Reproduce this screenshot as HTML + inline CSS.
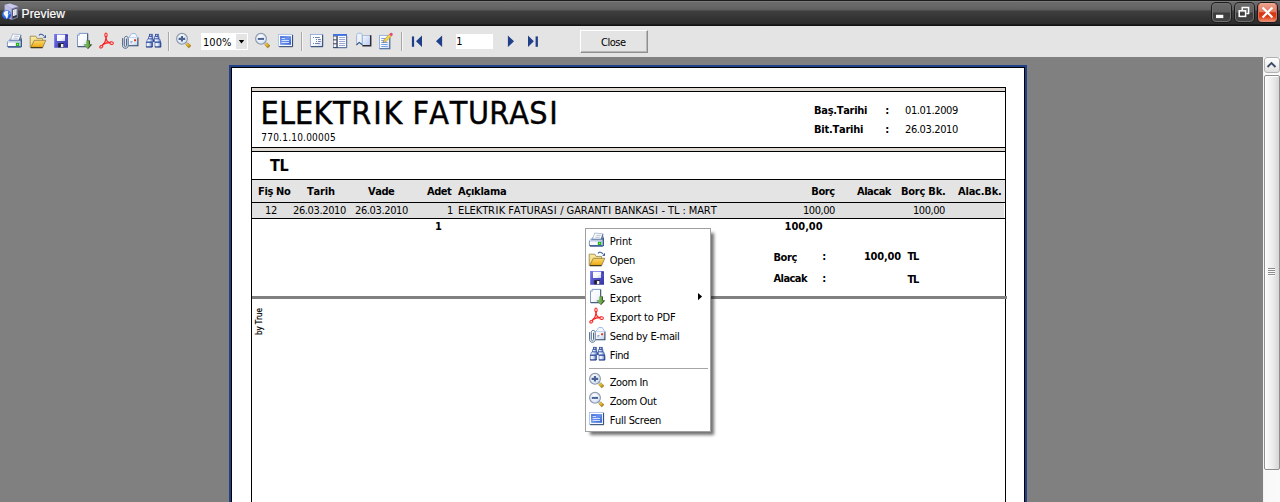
<!DOCTYPE html><html><head><meta charset="utf-8"><title>Preview</title><style>

html,body{margin:0;padding:0}
body{width:1280px;height:502px;overflow:hidden;position:relative;background:#808080;font-family:"DejaVu Sans Condensed","DejaVu Sans","Liberation Sans",sans-serif;font-size:11px;font-stretch:condensed;color:#000}
div,span{box-sizing:border-box}
.a{position:absolute}
.t{position:absolute;white-space:pre;display:block;font-kerning:none}
.big{-webkit-text-stroke:0.4px #000}
.ttl{-webkit-text-stroke:0.2px #fff}
.ic{position:absolute;width:18px;height:18px;line-height:0}
.ic svg{overflow:visible;display:block}
#tb{left:0;top:0;width:1280px;height:26px;background:linear-gradient(to bottom,#1c1c1c 0,#1c1c1c 1px,#808080 1px,#767676 2px,#6c6c6c 2px,#676767 6px,#5e5e5e 10px,#4c4c4c 10.5px,#3e3e3e 11.5px,#373737 16px,#2c2c2c 24px,#222 24.3px,#141414 24.8px,#101010 26px)}
.wb{position:absolute;top:3px;width:19px;height:19px;border-radius:4px;border:1px solid #6f6f6f;box-shadow:0 0 0 1px #1c1c1c;background:linear-gradient(to bottom,#6a6a6a 0,#606060 47%,#3c3c3c 53%,#444 100%)}
.wb.cl{border-color:#f0a694 #d8705c #e08c78 #d8705c;background:linear-gradient(to bottom,#ec9f8a 0,#e07a62 45%,#d8340f 52%,#dc3d16 75%,#f08a68 100%)}
#bar{left:0;top:26px;width:1280px;height:31px;background:#e4e4e4}
.sep{position:absolute;top:32px;width:2px;height:19px;border-left:1px solid #a9a9a9;border-right:1px solid #f4f4f4}
#close{left:580px;top:30px;width:68px;height:23px;background:#e4e4e4;border-top:1px solid #fff;border-left:1px solid #fff;border-right:1px solid #8e8e8e;border-bottom:1px solid #8e8e8e;box-shadow:inset -1px -1px 0 #b8b8b8}
#pg{left:229px;top:65px;width:798px;height:460px;background:#1f3f88}
#pgi{left:231px;top:67px;width:794px;height:460px;background:#fff;border:1px solid #000}
.bl{position:absolute;background:#000}
.bg{position:absolute;background:#ddd8d2}
#menu{left:585px;top:228px;width:126px;height:204px;background:#fff;border:1px solid #a0a0a0;box-shadow:4px 4px 3px -1px rgba(0,0,0,.55)}
#sb{left:1263px;top:57px;width:17px;height:445px;background:linear-gradient(to right,#ececec 0,#f8f8f8 1px,#fafafa 100%)}
#sbu{left:1264px;top:57px;width:16px;height:16px;border:1px solid #b2b2b2;border-radius:3px;background:linear-gradient(to bottom,#fdfdfd,#f2f2f2 50%,#dedede)}
#sbt{left:1264px;top:75px;width:16px;height:395px;border:1px solid #8e8e8e;border-radius:2px;background:linear-gradient(to right,#ffffff 0,#f6f6f6 20%,#ececec 55%,#d6d6d6 100%);box-shadow:inset 1px 1px 0 #fff}

</style></head><body>
<svg width="0" height="0" style="position:absolute"><defs>
<linearGradient id="gPf" x1="0" y1="0" x2="1" y2="0"><stop offset="0" stop-color="#ffffff"/><stop offset="0.55" stop-color="#f4f4ff"/><stop offset="1" stop-color="#b8c0e0"/></linearGradient>
<linearGradient id="gFb" x1="0" y1="0" x2="0" y2="1"><stop offset="0" stop-color="#f9eaa0"/><stop offset="1" stop-color="#f3d46a"/></linearGradient>
<linearGradient id="gFf" x1="0" y1="0" x2="0" y2="1"><stop offset="0" stop-color="#fbd76a"/><stop offset="0.7" stop-color="#f3b62a"/><stop offset="1" stop-color="#d89a10"/></linearGradient>
<linearGradient id="gSv" x1="0" y1="0" x2="1" y2="1"><stop offset="0" stop-color="#7878e8"/><stop offset="0.5" stop-color="#5454cc"/><stop offset="1" stop-color="#3030a0"/></linearGradient>
<linearGradient id="gLb" x1="0" y1="0" x2="1" y2="1"><stop offset="0" stop-color="#ffffff"/><stop offset="0.6" stop-color="#f4f6fa"/><stop offset="1" stop-color="#c4cce0"/></linearGradient>
<linearGradient id="gPg" x1="0" y1="0" x2="1" y2="1"><stop offset="0" stop-color="#ffffff"/><stop offset="0.6" stop-color="#f6f8ff"/><stop offset="1" stop-color="#c8d4f0"/></linearGradient>
<linearGradient id="gGr" x1="0" y1="0" x2="1" y2="0"><stop offset="0" stop-color="#8cc86a"/><stop offset="0.6" stop-color="#6aa84a"/><stop offset="1" stop-color="#3c7a28"/></linearGradient>
<linearGradient id="gEn" x1="0" y1="0" x2="1" y2="1"><stop offset="0" stop-color="#ffffff"/><stop offset="0.5" stop-color="#eef3fc"/><stop offset="1" stop-color="#b4c8ec"/></linearGradient>
<linearGradient id="gBn" x1="0" y1="0" x2="1" y2="0"><stop offset="0" stop-color="#ffffff"/><stop offset="0.45" stop-color="#e3eafb"/><stop offset="1" stop-color="#5a7ac4"/></linearGradient>
<radialGradient id="gLn" cx="0.4" cy="0.35" r="0.7"><stop offset="0" stop-color="#ffffff"/><stop offset="0.6" stop-color="#e6effc"/><stop offset="1" stop-color="#c4d8f4"/></radialGradient>
<linearGradient id="gHd" x1="0" y1="0" x2="1" y2="1"><stop offset="0" stop-color="#f4dc6a"/><stop offset="0.5" stop-color="#dcae20"/><stop offset="1" stop-color="#8a6408"/></linearGradient>
<linearGradient id="gFs" x1="0" y1="0" x2="1" y2="1"><stop offset="0" stop-color="#3a66d8"/><stop offset="0.45" stop-color="#6a94ee"/><stop offset="1" stop-color="#3460d4"/></linearGradient>
<linearGradient id="gBp" x1="0" y1="0" x2="1" y2="1"><stop offset="0" stop-color="#f6f9ff"/><stop offset="1" stop-color="#b4c8f0"/></linearGradient>
<linearGradient id="gTw" x1="0" y1="0" x2="0" y2="1"><stop offset="0" stop-color="#c4c4ee"/><stop offset="1" stop-color="#9c9cca"/></linearGradient>
<radialGradient id="gGl" cx="0.35" cy="0.3" r="0.8"><stop offset="0" stop-color="#6aa8ff"/><stop offset="0.6" stop-color="#2a6ae0"/><stop offset="1" stop-color="#1a48b0"/></radialGradient>
</defs></svg>
<div id="tb" class="a"></div>
<div class="ic" style="left:1px;top:2px"><svg width="20" height="20" viewBox="0 0 20 20" >
<path d="M3.6,2.8 L10.8,6.4 L10.8,18 L3.6,15 Z" fill="url(#gTw)"/>
<path d="M10.8,6.4 L17.2,4.2 L17,15.6 L10.8,18 Z" fill="#8a8ab4"/>
<path d="M3.6,2.8 L9,1.6 L17.2,4.2 L10.8,6.4 Z" fill="#c9c9f0"/>
<path d="M11.2,7.2 L16.5,5.5 L16.3,14.9 L11.2,16.9 Z" fill="#4c4c66"/>
<path d="M12,8 L15.7,6.8 L15.6,12.9 L12,14.3 Z" fill="#ececf6"/>
<path d="M13.4,7.8 L14.4,7.5 L14.3,13.2 L13.4,13.5 Z" fill="#c8c8d8"/>
<path d="M12,14.6 L15.6,13.2 L15.6,14.6 L12,16.1 Z" fill="#2c2c3c"/>
<circle cx="5.6" cy="12.7" r="4.5" fill="url(#gGl)"/>
<path d="M3.2,10.2 C4.4,8.8 6.6,8.6 7.4,9.4 C6.4,10 7.6,11 6.6,11.6 C7.8,12.4 7.4,13.2 6.8,14 C7.2,15.2 6.4,16.2 5.6,16.8 C4.8,15.8 5,14.6 4,13.8 C2.8,12.8 2.4,11.2 3.2,10.2Z M8,10.4 C8.8,10.6 9.4,11.4 9.6,12.2 C8.8,12.2 8.2,11.4 8,10.4Z" fill="#f4f8ff"/>
</svg></div>
<span class="t ttl" style="left:21.6px;top:7.6px;font-size:12px;line-height:12px;color:#fff;letter-spacing:0.1px;font-family:'Liberation Sans',sans-serif;">Preview</span>
<div class="wb" style="left:1212px"><svg class="a" style="left:0;top:0" width="17" height="17"><rect x="3" y="10.8" width="7.3" height="3.3" fill="#fff"/></svg></div>
<div class="wb" style="left:1235px"><svg class="a" style="left:0;top:0" width="17" height="17"><path d="M6.2,6 V3.6 H12.6 V9.4 H10.4" fill="none" stroke="#fff" stroke-width="1.5"/><rect x="3.2" y="6.8" width="6.4" height="5.6" fill="none" stroke="#fff" stroke-width="1.5"/></svg></div>
<div class="wb cl" style="left:1258px"><svg class="a" style="left:0;top:0" width="17" height="17"><path d="M3.6,3.6 L13.4,13.4 M13.4,3.6 L3.6,13.4" stroke="#fff" stroke-width="2.1"/></svg></div>
<div id="bar" class="a"></div>
<div class="ic" style="left:6px;top:32px"><svg width="18" height="18" viewBox="0 0 18 18" >
<path d="M0.9,10 L4.4,6.6 L14.9,6.6 L16,8 L16,14.2 L14.8,15.7 L2.2,15.7 L0.9,14.2 Z" fill="#6f8bb8"/>
<path d="M0.9,10 L4.4,6.6 L5.6,6.6 L2.2,10 Z" fill="#b4c6e2"/>
<path d="M14.7,3.6 L16,8 L16,14.2 L14.8,15.7 L14.65,9.4 Z" fill="#3f5a86"/>
<rect x="1.8" y="9.4" width="12.85" height="0.95" fill="#f7f9fd"/>
<rect x="1.8" y="10.35" width="12.85" height="3.75" fill="url(#gPf)"/>
<path d="M1.5,14.1 L14.7,14.1 L14.1,15.6 L2.3,15.6Z" fill="#44629a"/>
<path d="M6.7,2 L14.85,2.8 L12.95,7.9 L4.6,7.9 Z" fill="#fdfdff" stroke="#93a8c8" stroke-width="0.7"/>
<path d="M14.85,2.8 L12.95,7.9 L13.9,7.9 L15.5,3.3Z" fill="#4c6388"/>
<path d="M8.2,4.3 L12.75,4.3 M7.3,6.2 L11.8,6.2" stroke="#b4bac8" stroke-width="0.9"/>
<rect x="9.9" y="10.9" width="3.2" height="3" fill="#10b410"/>
<rect x="10.9" y="11.8" width="1.2" height="1.2" fill="#8cf04a"/>
</svg></div>
<div class="ic" style="left:29px;top:32px"><svg width="18" height="18" viewBox="0 0 18 18" >
<path d="M1.2,4.2 L6.9,4.2 L8,6.4 L13.6,6.4 L13.6,15.6 L1.2,15.6 Z" fill="url(#gFb)" stroke="#9a8c5a" stroke-width="0.9"/>
<path d="M5.3,8.3 L16.8,8.3 L13.6,15.6 L1.7,15.6 Z" fill="url(#gFf)" stroke="#8a7a4a" stroke-width="0.8"/>
<path d="M2,15.7 L13.4,15.7" stroke="#2a2210" stroke-width="0.9"/>
<path d="M10,3.6 C10.8,1.8 13.4,1.6 14.9,4" fill="none" stroke="#4468a8" stroke-width="1.2"/>
<path d="M14.2,5.7 L17,2.8 L17,5.9 Z" fill="#3a5c9c"/>
</svg></div>
<div class="ic" style="left:53px;top:32px"><svg width="18" height="18" viewBox="0 0 18 18" >
<path d="M1,2 L14.4,2 L15,2.6 L15,15.8 L1.6,15.8 L1,15.2Z" fill="url(#gSv)"/>
<rect x="1" y="2" width="1" height="13.4" fill="#8a8af0" opacity="0.7"/>
<rect x="4" y="2.7" width="8" height="6.4" fill="url(#gLb)"/>
<rect x="3.6" y="9.2" width="8.8" height="0.8" fill="#3838b0" opacity="0.6"/>
<rect x="5.2" y="11.2" width="5.8" height="4.1" fill="#1c1c30"/>
<rect x="7.9" y="12" width="2.5" height="3.2" fill="#f0f0f4"/>
<rect x="13.4" y="3.2" width="0.9" height="1.2" fill="#20205a"/>
</svg></div>
<div class="ic" style="left:76px;top:32px"><svg width="18" height="18" viewBox="0 0 18 18" >
<path d="M3.2,1.4 L11.6,1.4 L11.6,14.6 L1.5,14.6 L1.5,3.2 Z" fill="url(#gPg)" stroke="#6f8fc0" stroke-width="0.9"/>
<path d="M11.7,1.6 L11.7,14.7 L1.6,14.7" fill="none" stroke="#3a506e" stroke-width="1"/>
<path d="M1.5,3.3 L3.3,3.3 L3.3,1.4" fill="#dfe8f8" stroke="#7c9ac8" stroke-width="0.7"/>
<path d="M11.2,8.6 L14,8.6 L14,12.4 L16.3,12.4 L12,16.9 L7.8,12.4 L10.9,12.4 Z" fill="#1e2c1a"/>
<path d="M10.2,8.4 L13.4,8.4 L13.4,12.2 L15.6,12.2 L11.6,16.6 L7.3,12.2 L10.2,12.2 Z" fill="url(#gGr)"/>
</svg></div>
<div class="ic" style="left:98px;top:32px"><svg width="18" height="18" viewBox="0 0 18 18" >
<g fill="none" stroke="#fb2020" stroke-width="1.05" stroke-linecap="round" stroke-linejoin="round">
<ellipse cx="8" cy="3" rx="1.15" ry="2"/>
<path d="M8,4.9 L8,7.2" stroke-width="1.5"/>
<path d="M7.9,7.2 C7.4,9.8 5.6,12.4 4.2,13.9"/>
<path d="M8.1,7.2 C8.8,9 10.4,10.4 11.8,10.8"/>
<path d="M5,12.4 C7,11.4 9.6,10.8 11.8,10.7" stroke-width="1.3"/>
<path d="M7.8,8 L6.6,11.4 L9.8,10.6 Z" fill="#fb1c1c" stroke="none" opacity="0.35"/>
<ellipse cx="3.3" cy="14.7" rx="1.7" ry="1.15" transform="rotate(-35 3.3 14.7)"/>
<ellipse cx="13.6" cy="11.1" rx="1.8" ry="1.3" transform="rotate(10 13.6 11.1)"/>
</g>
</svg></div>
<div class="ic" style="left:121px;top:32px"><svg width="18" height="18" viewBox="0 0 18 18" >
<path d="M7.6,5.6 L10.8,1.5 L14.2,1.5 L16.8,5.6 Z" fill="#f3f6fc" stroke="#8eb0e0" stroke-width="0.8"/>
<rect x="7.6" y="5.6" width="9.2" height="7.9" fill="url(#gEn)"/>
<path d="M7.6,13.7 L16.9,13.7 L16.9,5.6" fill="none" stroke="#2c4468" stroke-width="1.1"/>
<path d="M7.6,5.6 L16.8,5.6" stroke="#c6d6f0" stroke-width="0.7"/>
<rect x="13.1" y="7.3" width="2" height="1.9" fill="#e2320c"/>
<path d="M9.4,9.6 L11.6,9.6 M9.4,10.8 L10.8,10.8" stroke="#7a8aa8" stroke-width="0.8"/>
<g fill="none" stroke="#46628a" stroke-width="0.95" stroke-linecap="round">
<path d="M1.6,6.5 L1.6,13.6 C1.6,17.2 7.2,17.2 7.2,13.6 L7.2,6.6 C7.2,3.6 3.3,3.6 3.3,6.6 L3.3,13.2 C3.3,15.2 5.5,15.2 5.5,13.2 L5.5,7"/>
</g>
</svg></div>
<div class="ic" style="left:145px;top:32px"><svg width="18" height="18" viewBox="0 0 18 18" >
<g stroke="#24449a" stroke-width="0.55">
<rect x="4.3" y="2.2" width="3" height="2.5" fill="#2c4a9a"/>
<rect x="3.6" y="4.8" width="4.3" height="2" fill="url(#gBn)"/>
<path d="M2.6,7 L8.3,7 L8.3,9.9 L1.6,9.9 Z" fill="url(#gBn)"/>
<rect x="1.2" y="10.5" width="6" height="4.4" fill="url(#gBn)"/>
<rect x="10.3" y="2.2" width="3" height="2.5" fill="#2c4a9a"/>
<rect x="9.7" y="4.8" width="4.3" height="2" fill="url(#gBn)"/>
<path d="M9.3,7 L14.8,7 L15.7,9.9 L9.3,9.9 Z" fill="url(#gBn)"/>
<rect x="10" y="10.5" width="5.8" height="4.4" fill="url(#gBn)"/>
</g>
<path d="M1.2,10.2 H7.2 M10,10.2 H15.8" stroke="#24449a" stroke-width="0.7"/>
<rect x="8.2" y="7.6" width="1.2" height="2.2" fill="#1c3a8a"/>
<rect x="5.2" y="2.8" width="1.1" height="1.1" fill="#fff"/><rect x="11.2" y="2.8" width="1.1" height="1.1" fill="#fff"/>
<path d="M1.2,15 H7.2 M10,15 H15.8" stroke="#16307a" stroke-width="0.9"/>
<path d="M7.2,10.6 V15 M15.8,10.6 V15" stroke="#1c3a8a" stroke-width="0.8"/>
</svg></div>
<div class="ic" style="left:175px;top:32px"><svg width="18" height="18" viewBox="0 0 18 18" >
<path d="M10.7,12.7 L12.7,10.7 L16,13.7 L13.7,15.9 Z" fill="url(#gHd)" stroke="#8a6a10" stroke-width="0.5"/>
<path d="M9.6,10.8 L11.2,9.6 L12.4,10.6 L10.8,12.2Z" fill="#c8ccd4"/>
<circle cx="7" cy="6.75" r="5.3" fill="url(#gLn)" stroke="#8e98a8" stroke-width="1.3"/>
<circle cx="7" cy="6.75" r="4.5" fill="none" stroke="#d6e2f4" stroke-width="0.6"/>
<path d="M3.6,5.8 H10.2 V8 H3.6 Z M5.9,3.9 H8 V9.6 H5.9 Z" fill="#4a6290"/>
</svg></div>
<div class="ic" style="left:254px;top:32px"><svg width="18" height="18" viewBox="0 0 18 18" >
<path d="M10.7,12.7 L12.7,10.7 L16,13.7 L13.7,15.9 Z" fill="url(#gHd)" stroke="#8a6a10" stroke-width="0.5"/>
<path d="M9.6,10.8 L11.2,9.6 L12.4,10.6 L10.8,12.2Z" fill="#c8ccd4"/>
<circle cx="7" cy="6.75" r="5.3" fill="url(#gLn)" stroke="#8e98a8" stroke-width="1.3"/>
<circle cx="7" cy="6.75" r="4.5" fill="none" stroke="#d6e2f4" stroke-width="0.6"/>
<path d="M3.8,5.9 H10 V7.9 H3.8 Z" fill="#4a6290"/>
</svg></div>
<div class="ic" style="left:277px;top:32px"><svg width="18" height="18" viewBox="0 0 18 18" >
<rect x="1.4" y="2.4" width="14" height="12" fill="#fdfdff" stroke="#a9c0ea" stroke-width="0.9"/>
<path d="M15.6,3 L15.6,14.7 L2.2,14.7" fill="none" stroke="#2a4468" stroke-width="1"/>
<rect x="3.1" y="4.1" width="11" height="8.7" fill="url(#gFs)"/>
<path d="M4.5,6.5 H8 M4.5,8.5 H12 M4.5,10.5 H12" stroke="#eef4ff" stroke-width="1" opacity="0.8"/>
</svg></div>
<div class="ic" style="left:309px;top:32px"><svg width="18" height="18" viewBox="0 0 18 18" >
<rect x="1.4" y="2.4" width="12.2" height="12.2" fill="url(#gPg)" stroke="#8eaad8" stroke-width="0.9"/>
<path d="M13.7,2.8 L13.7,14.7 L2,14.7" fill="none" stroke="#2c4668" stroke-width="1"/>
<path d="M6,5.5 H10.8 M9,7.5 H11.8 M9,9.5 H11.8 M6,11.5 H10.8" stroke="#7080a6" stroke-width="1"/>
<path d="M4,5.5 H5 M7,7.5 H8 M7,9.5 H8 M4,11.5 H5" stroke="#7080a6" stroke-width="1"/>
</svg></div>
<div class="ic" style="left:332px;top:32px"><svg width="18" height="18" viewBox="0 0 18 18" >
<rect x="1" y="2" width="14" height="14" fill="#fbfcff"/>
<rect x="1" y="2" width="14" height="1.9" fill="#3f6ee4"/>
<rect x="1" y="3.9" width="4.8" height="12.1" fill="#4a5262"/>
<rect x="1.5" y="4.5" width="2.8" height="2.8" fill="#f4f6ff"/><rect x="1.5" y="8.4" width="2.8" height="2.8" fill="#f4f6ff"/><rect x="1.5" y="12.3" width="2.8" height="2.8" fill="#f4f6ff"/>
<path d="M7,5.5 H13.2 M7,7.5 H13.2 M7,9.5 H13.2 M7,11.5 H13.2 M7,13.5 H13.2" stroke="#8e9ed0" stroke-width="0.9"/>
<path d="M14.7,4 L14.7,15.7 L1.2,15.7" fill="none" stroke="#2c4a78" stroke-width="0.9"/>
</svg></div>
<div class="ic" style="left:355px;top:32px"><svg width="18" height="18" viewBox="0 0 18 18" >
<rect x="7.6" y="3.4" width="8" height="10.2" fill="url(#gBp)" stroke="#8c9cc0" stroke-width="0.6"/>
<path d="M15.7,3.2 L15.7,13.8 L7.4,13.8" fill="none" stroke="#2c2c38" stroke-width="1.5"/>
<path d="M1.6,12.6 L1.6,3.4 C1.6,1.4 3,1.2 4.4,1.2 C6,1.2 7.2,1.6 7.2,3.4 L7.2,12.6 L4.2,10.2 Z" fill="#f1f2f4" stroke="#8cb4e8" stroke-width="0.9"/>
<path d="M1.4,13 L4.2,10.4 L7.2,12.8" fill="none" stroke="#3c587c" stroke-width="1.1"/>
</svg></div>
<div class="ic" style="left:378px;top:32px"><svg width="18" height="18" viewBox="0 0 18 18" >
<rect x="1.5" y="3.4" width="10.2" height="13.2" fill="url(#gPg)" stroke="#8eaee0" stroke-width="0.9"/>
<path d="M11.8,3.6 L11.8,16.8 L1.7,16.8" fill="none" stroke="#4a6a92" stroke-width="1.1"/>
<path d="M3.2,6.5 H8 M3.2,8.5 H7 M3.2,10.5 H9.6 M3.2,12.5 H9.6 M3.2,14.5 H9.6" stroke="#74a0ec" stroke-width="1"/>
<path d="M5.2,10.6 L5.7,8.2 L12,1.6 L14,3.4 L7.6,10 Z" fill="#f2d448" stroke="#b8922a" stroke-width="0.6"/>
<path d="M5.2,10.6 L5.7,8.2 L7.6,10 Z" fill="#fafafa" stroke="#6a6a6a" stroke-width="0.5"/>
<path d="M5.2,10.6 L5.4,9.7 L6.1,10.3Z" fill="#333"/>
<path d="M11.2,2.4 L12.6,0.9 C13.6,0.2 15.4,1.8 14.6,2.9 L13.3,4.3 Z" fill="#e2457e"/>
</svg></div>
<div class="sep" style="left:168px"></div>
<div class="sep" style="left:301px"></div>
<div class="sep" style="left:401px"></div>
<div class="a" style="left:201px;top:33px;width:47px;height:17px;background:#fff"></div>
<div class="a" style="left:236px;top:34px;width:11px;height:15px;background:#e4e4e4"></div>
<svg class="a" style="left:236px;top:34px" width="11" height="15"><path d="M2.8,6 L8.2,6 L5.5,9.4 Z" fill="#000"/></svg>
<span class="t" style="left:203.0px;top:37.0px;font-size:11px;line-height:11px;letter-spacing:0.04px;">100%</span>
<div class="a" style="left:456px;top:34px;width:37px;height:15px;background:#fff"></div>
<span class="t" style="left:456.2px;top:36.0px;font-size:11px;line-height:11px;">1</span>
<svg class="a" style="left:408px;top:32px" width="136" height="18"><g fill="#1f3f88"><rect x="3.9" y="4.4" width="2.2" height="10.4"/><path d="M14,3.6 L14,15 L8,9.3Z"/><path d="M34.1,3.6 L34.1,15 L28,9.3Z"/><path d="M99.9,3.6 L99.9,15 L106,9.3Z"/><path d="M120,3.6 L120,15 L125.8,9.3Z"/><rect x="127.6" y="4.4" width="2.3" height="10.4"/></g></svg>
<div id="close" class="a"></div>
<span class="t" style="left:601.0px;top:37.2px;font-size:11px;line-height:11px;letter-spacing:-0.47px;">Close</span>
<div id="pg" class="a"></div><div id="pgi" class="a"></div>
<div class="bl" style="left:251px;top:87px;width:1px;height:420px"></div>
<div class="bl" style="left:1005px;top:87px;width:1px;height:420px"></div>
<div class="bg" style="left:252px;top:88px;width:753px;height:3px"></div>
<div class="bl" style="left:251px;top:87px;width:755px;height:1px"></div>
<div class="bl" style="left:251px;top:91px;width:755px;height:1px"></div>
<div class="bg" style="left:252px;top:148px;width:753px;height:3px"></div>
<div class="bl" style="left:251px;top:147px;width:755px;height:1px"></div>
<div class="bl" style="left:251px;top:151px;width:755px;height:1px"></div>
<div class="a" style="left:252px;top:180px;width:753px;height:22px;background:#e4e4e4"></div>
<div class="a" style="left:252px;top:203px;width:752px;height:15px;background:#e0e0e0"></div>
<div class="bl" style="left:251px;top:179px;width:755px;height:1px"></div>
<div class="bl" style="left:251px;top:202px;width:755px;height:1px"></div>
<div class="bl" style="left:251px;top:218px;width:755px;height:1px"></div>
<div class="a" style="left:252px;top:296px;width:755px;height:3px;background:#808080"></div>
<span class="t big" style="left:260.6px;top:97.0px;font-size:32px;line-height:32px;letter-spacing:0.13px;">ELEK<span style="margin:0 0.60px">T</span>R<span style="margin:0 1.70px">I</span>K<span style="margin:0 0.42px"> </span>FA<span style="margin:0 0.60px">T</span>URAS<span style="margin:0 1.70px">I</span></span>
<span class="t" style="left:261.3px;top:132.5px;font-size:10px;line-height:10px;letter-spacing:0.22px;">770.1.10.00005</span>
<span class="t" style="left:814.0px;top:104.5px;font-size:11px;line-height:11px;font-weight:700;letter-spacing:-0.29px;">Baş.Tarihi</span>
<span class="t" style="left:814.0px;top:123.5px;font-size:11px;line-height:11px;font-weight:700;letter-spacing:-0.24px;">Bit.Tarihi</span>
<span class="t" style="left:885.2px;top:104.5px;font-size:11px;line-height:11px;font-weight:700;">:</span>
<span class="t" style="left:885.2px;top:123.5px;font-size:11px;line-height:11px;font-weight:700;">:</span>
<span class="t" style="left:905.0px;top:104.5px;font-size:11px;line-height:11px;letter-spacing:-0.37px;">01.01.2009</span>
<span class="t" style="left:905.0px;top:123.5px;font-size:11px;line-height:11px;letter-spacing:-0.37px;">26.03.2010</span>
<span class="t" style="left:270.0px;top:158.0px;font-size:16px;line-height:16px;font-weight:700;letter-spacing:-0.32px;">TL</span>
<span class="t" style="left:258.0px;top:186.0px;font-size:11px;line-height:11px;font-weight:700;letter-spacing:-0.35px;">Fiş No</span>
<span class="t" style="left:307.0px;top:186.0px;font-size:11px;line-height:11px;font-weight:700;letter-spacing:-0.17px;">Tarih</span>
<span class="t" style="left:368.0px;top:186.0px;font-size:11px;line-height:11px;font-weight:700;letter-spacing:-0.47px;">Vade</span>
<span class="t" style="left:427.0px;top:186.0px;font-size:11px;line-height:11px;font-weight:700;letter-spacing:-0.49px;">Adet</span>
<span class="t" style="left:458.0px;top:186.0px;font-size:11px;line-height:11px;font-weight:700;letter-spacing:-0.27px;">Açıklama</span>
<span class="t" style="left:811.3px;top:186.0px;font-size:11px;line-height:11px;font-weight:700;letter-spacing:-0.44px;">Borç</span>
<span class="t" style="left:857.0px;top:186.0px;font-size:11px;line-height:11px;font-weight:700;letter-spacing:-0.49px;">Alacak</span>
<span class="t" style="left:901.0px;top:186.0px;font-size:11px;line-height:11px;font-weight:700;letter-spacing:-0.24px;">Borç Bk.</span>
<span class="t" style="left:958.0px;top:186.0px;font-size:11px;line-height:11px;font-weight:700;letter-spacing:-0.21px;">Alac.Bk.</span>
<span class="t" style="left:265.0px;top:205.0px;font-size:11px;line-height:11px;letter-spacing:-0.29px;">12</span>
<span class="t" style="left:293.0px;top:205.0px;font-size:11px;line-height:11px;letter-spacing:-0.37px;">26.03.2010</span>
<span class="t" style="left:355.0px;top:205.0px;font-size:11px;line-height:11px;letter-spacing:-0.37px;">26.03.2010</span>
<span class="t" style="left:447.0px;top:205.0px;font-size:11px;line-height:11px;">1</span>
<span class="t" style="left:458.0px;top:205.0px;font-size:11px;line-height:11px;letter-spacing:-0.09px;">ELEKTR<span style="margin:0 0.55px">I</span>K FATURAS<span style="margin:0 0.55px">I</span> / GARANT<span style="margin:0 0.55px">I</span> BANKAS<span style="margin:0 0.55px">I</span> - TL : MART</span>
<span class="t" style="left:803.0px;top:205.0px;font-size:11px;line-height:11px;letter-spacing:-0.46px;">100,00</span>
<span class="t" style="left:913.0px;top:205.0px;font-size:11px;line-height:11px;letter-spacing:-0.46px;">100,00</span>
<span class="t" style="left:435.0px;top:221.0px;font-size:11px;line-height:11px;font-weight:700;">1</span>
<span class="t" style="left:784.6px;top:221.0px;font-size:11px;line-height:11px;font-weight:700;letter-spacing:-0.04px;">100,00</span>
<span class="t" style="left:773.4px;top:251.8px;font-size:11px;line-height:11px;font-weight:700;letter-spacing:-0.34px;">Borç</span>
<span class="t" style="left:822.2px;top:251.0px;font-size:11px;line-height:11px;font-weight:700;">:</span>
<span class="t" style="left:863.9px;top:251.0px;font-size:11px;line-height:11px;font-weight:700;letter-spacing:-0.18px;">100,00</span>
<span class="t" style="left:907.5px;top:251.0px;font-size:11px;line-height:11px;font-weight:700;letter-spacing:-1.25px;">TL</span>
<span class="t" style="left:773.4px;top:273.0px;font-size:11px;line-height:11px;font-weight:700;letter-spacing:-0.53px;">Alacak</span>
<span class="t" style="left:822.2px;top:273.0px;font-size:11px;line-height:11px;font-weight:700;">:</span>
<span class="t" style="left:907.5px;top:274.0px;font-size:11px;line-height:11px;font-weight:700;letter-spacing:-1.25px;">TL</span>
<span class="t" style="left:256px;top:335.4px;transform-origin:0 0;transform:rotate(-90deg);font-size:8px;line-height:8px;letter-spacing:-0.1px;-webkit-text-stroke:0.2px #000">by True</span>
<div id="sb" class="a"></div><div id="sbu" class="a"></div><div id="sbt" class="a"></div>
<svg class="a" style="left:1264px;top:57px" width="16" height="17"><path d="M3.5,10 L7.5,6 L11.5,10" fill="none" stroke="#3d4b66" stroke-width="1.9"/></svg>
<div class="a" style="left:1268px;top:268px;width:7px;height:8px;background:repeating-linear-gradient(to bottom,#8c8c8c 0,#8c8c8c 1px,#fbfbfb 1px,#fbfbfb 2px)"></div>
<div id="menu" class="a"></div>
<div class="ic" style="left:588px;top:231px"><svg width="18" height="18" viewBox="0 0 18 18" >
<path d="M0.9,10 L4.4,6.6 L14.9,6.6 L16,8 L16,14.2 L14.8,15.7 L2.2,15.7 L0.9,14.2 Z" fill="#6f8bb8"/>
<path d="M0.9,10 L4.4,6.6 L5.6,6.6 L2.2,10 Z" fill="#b4c6e2"/>
<path d="M14.7,3.6 L16,8 L16,14.2 L14.8,15.7 L14.65,9.4 Z" fill="#3f5a86"/>
<rect x="1.8" y="9.4" width="12.85" height="0.95" fill="#f7f9fd"/>
<rect x="1.8" y="10.35" width="12.85" height="3.75" fill="url(#gPf)"/>
<path d="M1.5,14.1 L14.7,14.1 L14.1,15.6 L2.3,15.6Z" fill="#44629a"/>
<path d="M6.7,2 L14.85,2.8 L12.95,7.9 L4.6,7.9 Z" fill="#fdfdff" stroke="#93a8c8" stroke-width="0.7"/>
<path d="M14.85,2.8 L12.95,7.9 L13.9,7.9 L15.5,3.3Z" fill="#4c6388"/>
<path d="M8.2,4.3 L12.75,4.3 M7.3,6.2 L11.8,6.2" stroke="#b4bac8" stroke-width="0.9"/>
<rect x="9.9" y="10.9" width="3.2" height="3" fill="#10b410"/>
<rect x="10.9" y="11.8" width="1.2" height="1.2" fill="#8cf04a"/>
</svg></div>
<span class="t" style="left:609.7px;top:236.0px;font-size:11px;line-height:11px;letter-spacing:-0.19px;">Print</span>
<div class="ic" style="left:588px;top:250px"><svg width="18" height="18" viewBox="0 0 18 18" >
<path d="M1.2,4.2 L6.9,4.2 L8,6.4 L13.6,6.4 L13.6,15.6 L1.2,15.6 Z" fill="url(#gFb)" stroke="#9a8c5a" stroke-width="0.9"/>
<path d="M5.3,8.3 L16.8,8.3 L13.6,15.6 L1.7,15.6 Z" fill="url(#gFf)" stroke="#8a7a4a" stroke-width="0.8"/>
<path d="M2,15.7 L13.4,15.7" stroke="#2a2210" stroke-width="0.9"/>
<path d="M10,3.6 C10.8,1.8 13.4,1.6 14.9,4" fill="none" stroke="#4468a8" stroke-width="1.2"/>
<path d="M14.2,5.7 L17,2.8 L17,5.9 Z" fill="#3a5c9c"/>
</svg></div>
<span class="t" style="left:609.7px;top:255.0px;font-size:11px;line-height:11px;letter-spacing:-0.29px;">Open</span>
<div class="ic" style="left:589px;top:269px"><svg width="18" height="18" viewBox="0 0 18 18" >
<path d="M1,2 L14.4,2 L15,2.6 L15,15.8 L1.6,15.8 L1,15.2Z" fill="url(#gSv)"/>
<rect x="1" y="2" width="1" height="13.4" fill="#8a8af0" opacity="0.7"/>
<rect x="4" y="2.7" width="8" height="6.4" fill="url(#gLb)"/>
<rect x="3.6" y="9.2" width="8.8" height="0.8" fill="#3838b0" opacity="0.6"/>
<rect x="5.2" y="11.2" width="5.8" height="4.1" fill="#1c1c30"/>
<rect x="7.9" y="12" width="2.5" height="3.2" fill="#f0f0f4"/>
<rect x="13.4" y="3.2" width="0.9" height="1.2" fill="#20205a"/>
</svg></div>
<span class="t" style="left:609.7px;top:274.0px;font-size:11px;line-height:11px;letter-spacing:-0.3px;">Save</span>
<div class="ic" style="left:589px;top:288px"><svg width="18" height="18" viewBox="0 0 18 18" >
<path d="M3.2,1.4 L11.6,1.4 L11.6,14.6 L1.5,14.6 L1.5,3.2 Z" fill="url(#gPg)" stroke="#6f8fc0" stroke-width="0.9"/>
<path d="M11.7,1.6 L11.7,14.7 L1.6,14.7" fill="none" stroke="#3a506e" stroke-width="1"/>
<path d="M1.5,3.3 L3.3,3.3 L3.3,1.4" fill="#dfe8f8" stroke="#7c9ac8" stroke-width="0.7"/>
<path d="M11.2,8.6 L14,8.6 L14,12.4 L16.3,12.4 L12,16.9 L7.8,12.4 L10.9,12.4 Z" fill="#1e2c1a"/>
<path d="M10.2,8.4 L13.4,8.4 L13.4,12.2 L15.6,12.2 L11.6,16.6 L7.3,12.2 L10.2,12.2 Z" fill="url(#gGr)"/>
</svg></div>
<span class="t" style="left:609.7px;top:293.0px;font-size:11px;line-height:11px;letter-spacing:-0.14px;">Export</span>
<div class="ic" style="left:588px;top:307px"><svg width="18" height="18" viewBox="0 0 18 18" >
<g fill="none" stroke="#fb2020" stroke-width="1.05" stroke-linecap="round" stroke-linejoin="round">
<ellipse cx="8" cy="3" rx="1.15" ry="2"/>
<path d="M8,4.9 L8,7.2" stroke-width="1.5"/>
<path d="M7.9,7.2 C7.4,9.8 5.6,12.4 4.2,13.9"/>
<path d="M8.1,7.2 C8.8,9 10.4,10.4 11.8,10.8"/>
<path d="M5,12.4 C7,11.4 9.6,10.8 11.8,10.7" stroke-width="1.3"/>
<path d="M7.8,8 L6.6,11.4 L9.8,10.6 Z" fill="#fb1c1c" stroke="none" opacity="0.35"/>
<ellipse cx="3.3" cy="14.7" rx="1.7" ry="1.15" transform="rotate(-35 3.3 14.7)"/>
<ellipse cx="13.6" cy="11.1" rx="1.8" ry="1.3" transform="rotate(10 13.6 11.1)"/>
</g>
</svg></div>
<span class="t" style="left:609.7px;top:312.0px;font-size:11px;line-height:11px;letter-spacing:-0.16px;">Export to PDF</span>
<div class="ic" style="left:588px;top:326px"><svg width="18" height="18" viewBox="0 0 18 18" >
<path d="M7.6,5.6 L10.8,1.5 L14.2,1.5 L16.8,5.6 Z" fill="#f3f6fc" stroke="#8eb0e0" stroke-width="0.8"/>
<rect x="7.6" y="5.6" width="9.2" height="7.9" fill="url(#gEn)"/>
<path d="M7.6,13.7 L16.9,13.7 L16.9,5.6" fill="none" stroke="#2c4468" stroke-width="1.1"/>
<path d="M7.6,5.6 L16.8,5.6" stroke="#c6d6f0" stroke-width="0.7"/>
<rect x="13.1" y="7.3" width="2" height="1.9" fill="#e2320c"/>
<path d="M9.4,9.6 L11.6,9.6 M9.4,10.8 L10.8,10.8" stroke="#7a8aa8" stroke-width="0.8"/>
<g fill="none" stroke="#46628a" stroke-width="0.95" stroke-linecap="round">
<path d="M1.6,6.5 L1.6,13.6 C1.6,17.2 7.2,17.2 7.2,13.6 L7.2,6.6 C7.2,3.6 3.3,3.6 3.3,6.6 L3.3,13.2 C3.3,15.2 5.5,15.2 5.5,13.2 L5.5,7"/>
</g>
</svg></div>
<span class="t" style="left:609.7px;top:331.0px;font-size:11px;line-height:11px;letter-spacing:-0.33px;">Send by E-mail</span>
<div class="ic" style="left:589px;top:345px"><svg width="18" height="18" viewBox="0 0 18 18" >
<g stroke="#24449a" stroke-width="0.55">
<rect x="4.3" y="2.2" width="3" height="2.5" fill="#2c4a9a"/>
<rect x="3.6" y="4.8" width="4.3" height="2" fill="url(#gBn)"/>
<path d="M2.6,7 L8.3,7 L8.3,9.9 L1.6,9.9 Z" fill="url(#gBn)"/>
<rect x="1.2" y="10.5" width="6" height="4.4" fill="url(#gBn)"/>
<rect x="10.3" y="2.2" width="3" height="2.5" fill="#2c4a9a"/>
<rect x="9.7" y="4.8" width="4.3" height="2" fill="url(#gBn)"/>
<path d="M9.3,7 L14.8,7 L15.7,9.9 L9.3,9.9 Z" fill="url(#gBn)"/>
<rect x="10" y="10.5" width="5.8" height="4.4" fill="url(#gBn)"/>
</g>
<path d="M1.2,10.2 H7.2 M10,10.2 H15.8" stroke="#24449a" stroke-width="0.7"/>
<rect x="8.2" y="7.6" width="1.2" height="2.2" fill="#1c3a8a"/>
<rect x="5.2" y="2.8" width="1.1" height="1.1" fill="#fff"/><rect x="11.2" y="2.8" width="1.1" height="1.1" fill="#fff"/>
<path d="M1.2,15 H7.2 M10,15 H15.8" stroke="#16307a" stroke-width="0.9"/>
<path d="M7.2,10.6 V15 M15.8,10.6 V15" stroke="#1c3a8a" stroke-width="0.8"/>
</svg></div>
<span class="t" style="left:609.7px;top:350.0px;font-size:11px;line-height:11px;letter-spacing:-0.47px;">Find</span>
<div class="ic" style="left:588px;top:372px"><svg width="18" height="18" viewBox="0 0 18 18" >
<path d="M10.7,12.7 L12.7,10.7 L16,13.7 L13.7,15.9 Z" fill="url(#gHd)" stroke="#8a6a10" stroke-width="0.5"/>
<path d="M9.6,10.8 L11.2,9.6 L12.4,10.6 L10.8,12.2Z" fill="#c8ccd4"/>
<circle cx="7" cy="6.75" r="5.3" fill="url(#gLn)" stroke="#8e98a8" stroke-width="1.3"/>
<circle cx="7" cy="6.75" r="4.5" fill="none" stroke="#d6e2f4" stroke-width="0.6"/>
<path d="M3.6,5.8 H10.2 V8 H3.6 Z M5.9,3.9 H8 V9.6 H5.9 Z" fill="#4a6290"/>
</svg></div>
<span class="t" style="left:609.7px;top:377.0px;font-size:11px;line-height:11px;letter-spacing:-0.38px;">Zoom In</span>
<div class="ic" style="left:588px;top:391px"><svg width="18" height="18" viewBox="0 0 18 18" >
<path d="M10.7,12.7 L12.7,10.7 L16,13.7 L13.7,15.9 Z" fill="url(#gHd)" stroke="#8a6a10" stroke-width="0.5"/>
<path d="M9.6,10.8 L11.2,9.6 L12.4,10.6 L10.8,12.2Z" fill="#c8ccd4"/>
<circle cx="7" cy="6.75" r="5.3" fill="url(#gLn)" stroke="#8e98a8" stroke-width="1.3"/>
<circle cx="7" cy="6.75" r="4.5" fill="none" stroke="#d6e2f4" stroke-width="0.6"/>
<path d="M3.8,5.9 H10 V7.9 H3.8 Z" fill="#4a6290"/>
</svg></div>
<span class="t" style="left:609.7px;top:396.0px;font-size:11px;line-height:11px;letter-spacing:-0.35px;">Zoom Out</span>
<div class="ic" style="left:588px;top:410px"><svg width="18" height="18" viewBox="0 0 18 18" >
<rect x="1.4" y="2.4" width="14" height="12" fill="#fdfdff" stroke="#a9c0ea" stroke-width="0.9"/>
<path d="M15.6,3 L15.6,14.7 L2.2,14.7" fill="none" stroke="#2a4468" stroke-width="1"/>
<rect x="3.1" y="4.1" width="11" height="8.7" fill="url(#gFs)"/>
<path d="M4.5,6.5 H8 M4.5,8.5 H12 M4.5,10.5 H12" stroke="#eef4ff" stroke-width="1" opacity="0.8"/>
</svg></div>
<span class="t" style="left:609.7px;top:415.0px;font-size:11px;line-height:11px;letter-spacing:-0.33px;">Full Screen</span>
<div class="a" style="left:589px;top:368px;width:119px;height:1px;background:#a6a6a6"></div>
<svg class="a" style="left:696px;top:291px" width="8" height="11"><path d="M2,2 L6.1,5.6 L2,9.2Z" fill="#000"/></svg>
</body></html>
